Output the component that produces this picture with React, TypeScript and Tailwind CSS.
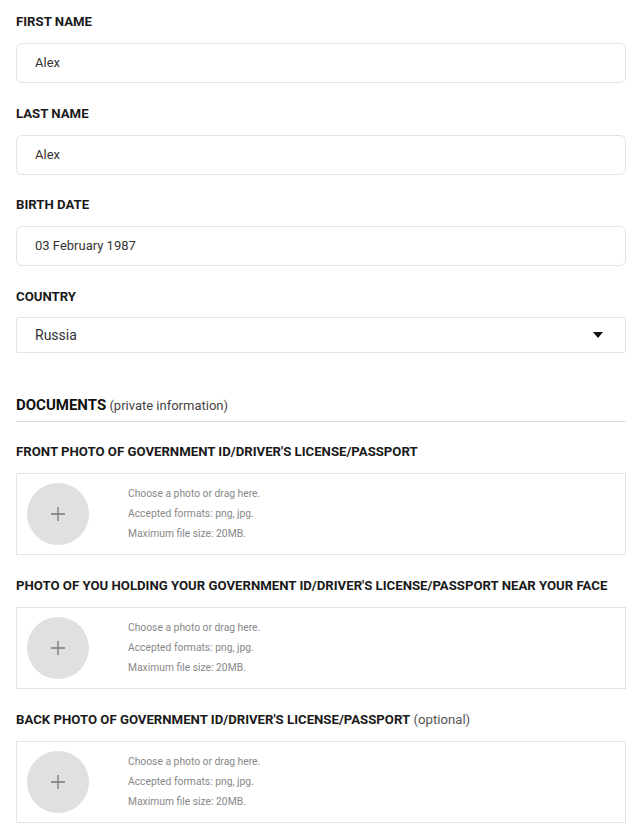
const labelCls = "text-[13.2px] font-bold text-[#1a1a1a] leading-[13px]";

function Field({ label, value }: { label: string; value: string }) {
  return (
    <div className="flex flex-col">
      <div className={labelCls + " uppercase"}>{label}</div>
      <div className="mt-[15px] h-[40px] rounded-[6px] border border-[#e3e3e3] bg-white flex items-center pl-[18px] text-[13px] text-[#333]">
        {value}
      </div>
    </div>
  );
}

function Upload({ label, note }: { label: string; note?: string }) {
  return (
    <div className="flex flex-col">
      <div className={labelCls}>
        <span className="uppercase">{label}</span>
        {note && <span className="font-normal text-[#555]"> {note}</span>}
      </div>
      <div className="mt-[15px] h-[82px] border border-[#e3e3e3] bg-white flex items-center pl-[10px]">
        <div className="w-[62px] h-[62px] rounded-full bg-[#e0e0e0] flex items-center justify-center">
          <svg width="14" height="14" viewBox="0 0 14 14" className="text-[#777]">
            <path d="M7 0v14M0 7h14" stroke="currentColor" strokeWidth="1.3" />
          </svg>
        </div>
        <div className="ml-[39px] flex flex-col gap-[8px] text-[10.3px] leading-[12px] text-[#888]">
          <span>Choose a photo or drag here.</span>
          <span>Accepted formats: png, jpg.</span>
          <span>Maximum file size: 20MB.</span>
        </div>
      </div>
    </div>
  );
}

export default function App() {
  return (
    <div className="min-h-screen bg-white px-[16px] pt-[15px] font-['Roboto',sans-serif]">
      <div className="w-[610px] flex flex-col">
        <Field label="First name" value="Alex" />
        <div className="mt-[24px]">
          <Field label="Last name" value="Alex" />
        </div>
        <div className="mt-[23px]">
          <Field label="Birth date" value="03 February 1987" />
        </div>
        <div className="mt-[24px] flex flex-col">
          <div className={labelCls + " uppercase"}>Country</div>
          <div className="mt-[14px] h-[36px] rounded-[2px] border border-[#e3e3e3] bg-white flex items-center justify-between pl-[18px] pr-[22px] text-[14px] text-[#333]">
            <span>Russia</span>
            <svg width="10" height="6" viewBox="0 0 10 6">
              <path d="M0 0h10L5 6z" fill="#111" />
            </svg>
          </div>
        </div>

        <div className="mt-[42px] pb-[5px] border-b border-[#dcdcdc] leading-[20px]">
          <span className="text-[15px] font-bold text-[#111]">DOCUMENTS</span>
          <span className="text-[13px] text-[#444]"> (private information)</span>
        </div>

        <div className="mt-[23px]">
          <Upload label="Front photo of government ID/driver's license/passport" />
        </div>
        <div className="mt-[24px]">
          <Upload label="Photo of you holding your government ID/driver's license/passport near your face" />
        </div>
        <div className="mt-[24px]">
          <Upload label="Back photo of government ID/driver's license/passport" note="(optional)" />
        </div>
      </div>
    </div>
  );
}
